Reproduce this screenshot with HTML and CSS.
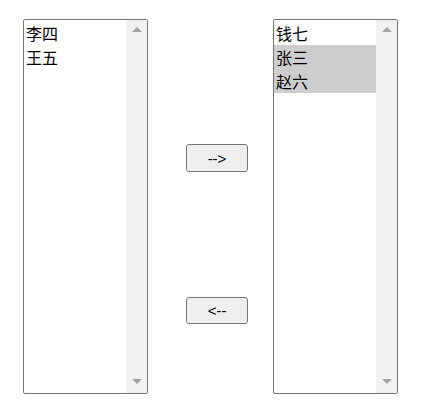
FILE: index.html
```html
<!DOCTYPE html>
<html lang="zh">
  <head>
    <meta charset="UTF-8" />
    <title>选择</title>
    <link rel="stylesheet" href="styles.css">
  </head>
  <body>
    <div class="picker">
      <div class="list-box">
        <div class="options">
          <div class="option">李四</div>
          <div class="option">王五</div>
        </div>
        <div class="scrollbar">
          <span class="arrow up"></span>
          <span class="arrow down"></span>
        </div>
      </div>

      <div class="actions">
        <button class="move-btn move-right">--&gt;</button>
        <button class="move-btn move-left">&lt;--</button>
      </div>

      <div class="list-box">
        <div class="options">
          <div class="option">钱七</div>
          <div class="option selected">张三</div>
          <div class="option selected">赵六</div>
        </div>
        <div class="scrollbar">
          <span class="arrow up"></span>
          <span class="arrow down"></span>
        </div>
      </div>
    </div>
  </body>
</html>
```

FILE: styles.css
```css
* {
  margin: 0;
  padding: 0;
  box-sizing: border-box;
}

body {
  font-family: "Microsoft YaHei", "Noto Sans CJK SC", sans-serif;
  background: white;
}

.picker {
  display: flex;
  padding: 19px 0 0 23px;
}

.list-box {
  width: 125px;
  height: 375px;
  border: 1px solid #767676;
  border-radius: 2px;
  display: flex;
  background: white;
}

.options {
  flex: 1;
  padding-top: 1px;
}

.option {
  height: 24px;
  line-height: 24px;
  padding-left: 2px;
  font-size: 16px;
  color: #000;
}

.option.selected {
  background: #cecece;
}

.scrollbar {
  width: 21px;
  background: #f1f1f1;
  display: flex;
  flex-direction: column;
  justify-content: space-between;
  align-items: center;
  padding: 7px 0 9px;
}

.arrow {
  width: 0;
  height: 0;
  border-left: 5px solid transparent;
  border-right: 5px solid transparent;
}

.arrow.up {
  border-bottom: 5px solid #a3a3a3;
}

.arrow.down {
  border-top: 5px solid #a3a3a3;
}

.actions {
  width: 125px;
  padding-left: 38px;
}

.move-btn {
  display: block;
  width: 62px;
  height: 28px;
  background: #efefef;
  border: 1px solid #767676;
  border-radius: 3px;
  font-family: "Liberation Sans", Arial, sans-serif;
  font-size: 15px;
  color: #000;
}

.move-right {
  margin-top: 125px;
}

.move-left {
  margin-top: 125px;
  height: 27px;
}
```
